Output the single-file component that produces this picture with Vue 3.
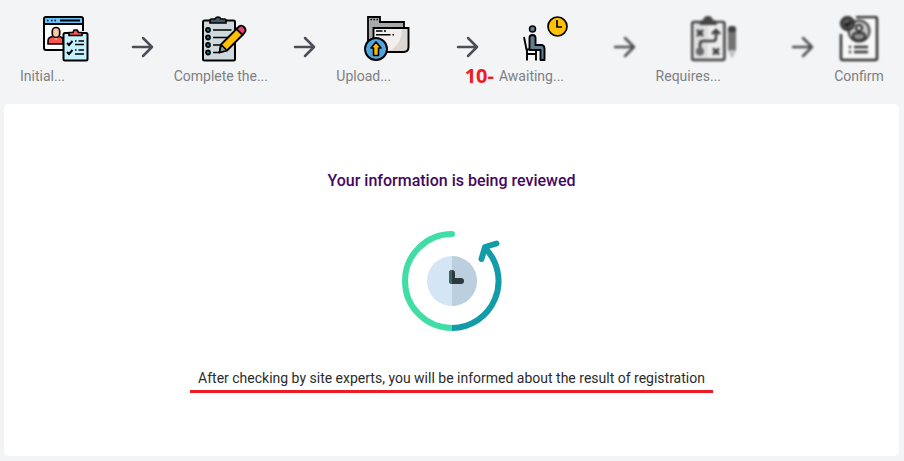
<template>
  <main class="page">
    <ol class="steps">
      <template v-for="(step, index) in steps" :key="step.id">
        <li :class="['step', { 'step--inactive': step.inactive }]">
          <svg v-if="step.id === 'initial'" class="step__icon" viewBox="0 0 46 46" aria-hidden="true">
            <rect x="1" y="1" width="39" height="33" rx="2" fill="#fff" />
            <path d="M1 8V2.500Q1 1 2.500 1H38.500Q40 1 40 2.500V8Z" fill="#68c4fa" />
            <path d="M20 34H3Q1 34 1 32V3Q1 1 3 1H38Q40 1 40 3V15M1 8H40M17 4.500H37" fill="none" stroke="#000" stroke-width="2" />
            <path d="M4 4.500H5.500M8 4.500H9.500M11.500 4.500H13" stroke="#000" stroke-width="1.500" />
            <path d="M5 28V25Q5 21 10 20.500H16Q20 21 20 24V28Z" fill="#ff5352" stroke="#000" stroke-width="1.600" />
            <path d="M9.500 20.500 13 24 16.500 20.500V17H9.500Z" fill="#fac8a2" />
            <rect x="9.300" y="11.500" width="7.400" height="10" rx="3.700" fill="#fac8a2" stroke="#000" stroke-width="1.700" />
            <rect x="20.500" y="17" width="24" height="27.500" rx="1.500" fill="#c5f1fd" stroke="#000" stroke-width="2" />
            <path d="M26 19.500V16.500H30L31 14H34L35.500 16.500H39V19.500Z" fill="#ff5352" stroke="#000" stroke-width="1.700" stroke-linejoin="round" />
            <path d="M24 27 26 29 29.500 25M24 36 26 38 29.500 34" fill="none" stroke="#000" stroke-width="1.900" />
            <path d="M32 25H33.500M35.500 25H41M32 28.500H41M32 34H33.500M35.500 34H41M32 38H41" stroke="#000" stroke-width="1.500" />
          </svg>

          <svg v-else-if="step.id === 'complete'" class="step__icon" viewBox="0 0 46 46" aria-hidden="true">
            <rect x="2" y="4.500" width="32" height="40" rx="1.500" fill="#cfd8dd" stroke="#000" stroke-width="2" />
            <path d="M9 7V4Q9 3 10.500 3H14Q15 1 17 1T20 3H23.500Q25 3 25 4V7Z" fill="#465969" stroke="#000" stroke-width="1.600" />
            <g fill="#0595a9" stroke="#000" stroke-width="1.800">
              <circle cx="7" cy="14" r="2" />
              <circle cx="7" cy="21.500" r="2" />
              <circle cx="7" cy="29" r="2" />
              <circle cx="7" cy="36.500" r="2" />
            </g>
            <path d="M12 14H30.500M12 21.500H28M12 29H21M12 36.500H19" stroke="#000" stroke-width="1.700" />
            <path d="M18.500 36.500 20 28.500 36.500 12 42.500 18 26 34.500Z" fill="#ffbe00" stroke="#000" stroke-width="1.800" stroke-linejoin="round" />
            <path d="M18.500 36.500 20 28.500 26 34.500Z" fill="#899ba2" stroke="#000" stroke-width="1.700" stroke-linejoin="round" />
            <path d="M35.500 13 38 10.500Q40.500 8.500 43 11T44 16L41.500 19Z" fill="#ed3d73" stroke="#000" stroke-width="1.800" />
          </svg>

          <svg v-else-if="step.id === 'upload'" class="step__icon" viewBox="0 0 46 46" aria-hidden="true">
            <path d="M4 34V1H16V6H40V13H10V34Z" fill="#a8a9ab" stroke="#000" stroke-width="1.800" />
            <path d="M6.500 3.500H8M9.500 3.500H11M12.500 3.500H14" stroke="#000" stroke-width="1.500" />
            <path d="M9.500 12H44.500V31Q44.500 36 39.500 36H9.500Z" fill="#f1eeeb" />
            <path d="M38 12H44.500V31Q44.500 36 39.500 36H23Q38 30 38 12Z" fill="#dbd7d4" />
            <path d="M9.500 12H44.500V31Q44.500 36 39.500 36H9.500Z" fill="none" stroke="#000" stroke-width="1.900" />
            <path d="M12 15H18.500M20 15H22M12 18.800H26.500M28.500 18.800H30" stroke="#000" stroke-width="1.600" />
            <circle cx="12" cy="33" r="11" fill="#4ea6dc" stroke="#000" stroke-width="1.900" />
            <path d="M12 26 17 32H14.500V39.500H9.500V32H7Z" fill="#ffb900" stroke="#000" stroke-width="1.600" stroke-linejoin="round" />
          </svg>

          <svg v-else-if="step.id === 'awaiting'" class="step__icon" viewBox="0 0 46 46" aria-hidden="true">
            <circle cx="34.500" cy="10.500" r="9.500" fill="#ffc107" stroke="#000" stroke-width="1.700" />
            <path d="M34 4V11H39" fill="none" stroke="#000" stroke-width="1.700" />
            <circle cx="9.500" cy="13" r="3" fill="#607d8b" stroke="#000" stroke-width="1.500" />
            <path d="M1 21 3.500 33.500H14M4 34V44.500M13 35V44.500M4 38H13" fill="none" stroke="#000" stroke-width="1.900" />
            <path d="M6.500 33V22Q6.500 19 9.500 19T12.500 22V29H18Q21.500 29 21.500 33V44H17.500V34H7.500Q6.500 34 6.500 33Z" fill="#607d8b" stroke="#000" stroke-width="1.900" stroke-linejoin="round" />
          </svg>

          <svg v-else-if="step.id === 'requires'" class="step__icon" viewBox="1 0 46 46" aria-hidden="true">
            <rect x="2" y="6" width="32.500" height="38" rx="2" fill="#dedede" stroke="#414141" stroke-width="2.500" />
            <path d="M18 7H32V42H18Z" fill="#ededed" />
            <path d="M9.500 9Q9.500 4 13 4Q14 0 18 0T23 4Q27 4 27 9Z" fill="#454545" />
            <path d="M7 14 13 20M13 14 7 20M23 32.500 29 38.500M29 32.500 23 38.500" stroke="#404040" stroke-width="2.500" />
            <path d="M10 35V28Q10 25 13 25H23Q26 25 26 22V14M22 18 26 14 30 18" fill="none" stroke="#404040" stroke-width="2.500" />
            <circle cx="10" cy="35.500" r="4" fill="#686868" />
            <path d="M38 34V13Q38 10 42 10T46 13V34L42 42Z" fill="#727272" />
            <path d="M38 16V13Q38 10 42 10T46 13V16Z" fill="#404040" />
            <path d="M38 34H46L42 42Z" fill="#c2c2c2" />
          </svg>

          <svg v-else class="step__icon" viewBox="-3 0 46 46" aria-hidden="true">
            <path d="M2 17V42Q2 44 4 44H36Q38 44 38 42V3Q38 1 36 1H18L2 17Z" fill="#f8f8f8" />
            <path d="M2 18V42Q2 44 4 44H36Q38 44 38 42V3Q38 1 36 1H17" fill="none" stroke="#303030" stroke-width="2.500" />
            <circle cx="20" cy="15" r="10.500" fill="#c7c7c7" stroke="#404040" stroke-width="2" />
            <circle cx="20" cy="12" r="3" fill="#ddd" stroke="#303030" stroke-width="2" />
            <path d="M14 22V20Q14 17 17 17H23Q26 17 26 20V22Q20 27 14 22Z" fill="#909090" stroke="#303030" stroke-width="2" />
            <circle cx="8.500" cy="7.500" r="6.500" fill="#565656" stroke="#252525" stroke-width="2" />
            <path d="M5.500 7.500 8 10 12 5.500" fill="none" stroke="#161616" stroke-width="2" />
            <path d="M10 31H12M15 31H29M10 36H12M15 36H29" stroke="#303030" stroke-width="2.300" />
          </svg>

          <span class="step__label">
            <span v-if="step.marker" class="step__marker">{{ step.marker }}</span>
            {{ step.label }}
          </span>
        </li>

        <li
          v-if="index < steps.length - 1"
          :class="['arrow', { 'arrow--inactive': steps[index + 1].inactive }]"
          aria-hidden="true"
        >
          <svg class="arrow__icon" viewBox="0 0 24 24">
            <path d="M2 12H21M12 3 21 12 12 21" />
          </svg>
        </li>
      </template>
    </ol>

    <section class="card">
      <h1 class="card__title">Your information is being reviewed</h1>

      <svg class="card__clock" viewBox="0 0 100 100" aria-hidden="true">
        <path d="M50 3A47 47 0 0 0 50 97" fill="none" stroke="#40dda5" stroke-width="6" />
        <circle cx="50" cy="3" r="3" fill="#40dda5" />
        <path d="M50 97A47 47 0 0 0 83 17" fill="none" stroke="#129ba9" stroke-width="6" />
        <path d="M79.500 28 83 16 94.500 12.500" fill="none" stroke="#129ba9" stroke-width="6" stroke-linecap="round" stroke-linejoin="round" />
        <circle cx="50" cy="50" r="25" fill="#d4e5f6" />
        <path d="M50 25A25 25 0 0 1 50 75Z" fill="#bccfdf" />
        <path d="M50 42V50H59" fill="none" stroke="#293b3e" stroke-width="6" stroke-linecap="round" stroke-linejoin="round" />
        <path d="M50 39A3 3 0 0 0 47 42V50A3 3 0 0 0 50 53Z" fill="#42665f" />
      </svg>

      <p class="card__message">
        After checking by site experts, you will be informed about the result of registration
      </p>
    </section>
  </main>
</template>

<script setup>
const steps = [
  { id: 'initial', label: 'Initial...' },
  { id: 'complete', label: 'Complete the...' },
  { id: 'upload', label: 'Upload...' },
  { id: 'awaiting', label: 'Awaiting...', marker: '10-' },
  { id: 'requires', label: 'Requires...', inactive: true },
  { id: 'confirm', label: 'Confirm', inactive: true },
];
</script>

<style>
body {
  margin: 0;
  background: #f3f4f6;
}
</style>

<style scoped>
.page {
  box-sizing: border-box;
  padding: 16px 5px 5px 4px;
  font-family: Roboto, sans-serif;
  background: #f3f4f6;
}

.steps {
  display: grid;
  grid-template-columns: 92fr 24px 101fr 24px 101fr 24px 95fr 24px 117fr 24px 49fr;
  column-gap: 19px;
  margin: 0;
  padding: 0 16px 18px;
  list-style: none;
}

.step {
  display: flex;
  flex-direction: column;
  align-items: center;
  min-width: 0;
}

.step__icon {
  width: 46px;
  height: 46px;
  flex: none;
}

.step__label {
  position: relative;
  align-self: stretch;
  margin-top: 4px;
  font-size: 14px;
  line-height: 20px;
  color: #7e7f83;
  white-space: nowrap;
}

.step__marker {
  position: absolute;
  right: 100%;
  margin-right: 5px;
  font-family: 'Open Sans', sans-serif;
  font-size: 20px;
  font-weight: 700;
  color: #ed1c24;
}

.step--inactive .step__icon {
  filter: grayscale(1) blur(1px);
}

.arrow {
  height: 24px;
  margin-top: 19px;
}

.arrow__icon {
  display: block;
  width: 24px;
  height: 24px;
  fill: none;
  stroke: #4b4f58;
  stroke-width: 2.5;
  stroke-linecap: round;
  stroke-linejoin: round;
}

.arrow--inactive {
  filter: grayscale(1) blur(1px);
}

/* Review card */
.card {
  display: flex;
  flex-direction: column;
  align-items: center;
  padding: 65px 20px 63px;
  background: #fff;
  border-radius: 5px;
}

.card__title {
  margin: 0;
  font-size: 16px;
  font-weight: 500;
  line-height: 24px;
  color: #43085e;
}

.card__clock {
  width: 100px;
  height: 100px;
  margin: 38px 0 37px;
}

.card__message {
  margin: 0;
  padding: 0 8px 1px;
  border-bottom: 3px solid #ed1c24;
  font-size: 14px;
  line-height: 21px;
  color: #2b2b2b;
}
</style>
